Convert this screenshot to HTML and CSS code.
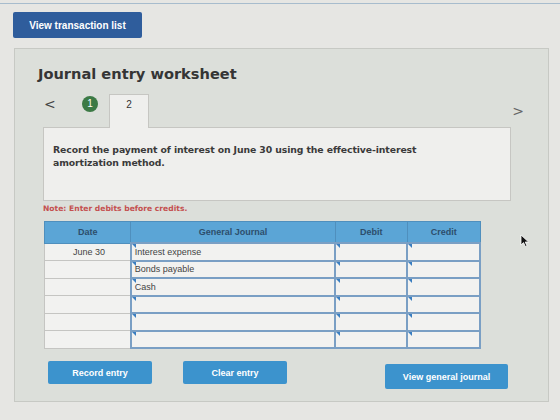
FILE: index.html
```html
<!DOCTYPE html>
<html lang="en">
<head>
  <meta charset="UTF-8" />
  <meta name="viewport" content="width=device-width, initial-scale=1.0" />
  <title>Journal entry worksheet</title>
  <link rel="stylesheet" href="styles.css">
</head>
<body>
  <div class="topline"></div>
  <button class="btn-dark">View transaction list</button>

  <div class="panel">
    <h2>Journal entry worksheet</h2>

    <div class="steps">
      <span class="arrow">&lt;</span>
      <span class="step-done">1</span>
      <span class="step-tab">2</span>
      <span class="arrow arrow-next">&gt;</span>
    </div>

    <div class="question">
      Record the payment of interest on June 30 using the effective-interest<br>
      amortization method.
    </div>

    <p class="note">Note: Enter debits before credits.</p>

    <table class="journal">
      <thead>
        <tr>
          <th class="col-date">Date</th>
          <th class="col-gj">General Journal</th>
          <th class="col-num">Debit</th>
          <th class="col-num">Credit</th>
        </tr>
      </thead>
      <tbody id="rows"></tbody>
    </table>

    <div class="actions">
      <button class="btn">Record entry</button>
      <button class="btn btn-clear">Clear entry</button>
      <button class="btn btn-wide">View general journal</button>
    </div>
  </div>

  <svg class="cursor" width="10" height="14" viewBox="0 0 10 14">
    <path d="M1 1 L1 11 L3.5 8.6 L5.4 12.6 L7 11.9 L5.2 8 L8.6 8 Z" fill="#111" stroke="#fff" stroke-width="0.8"/>
  </svg>

  <script>
    const lines = [
      { date: 'June 30', account: 'Interest expense' },
      { date: '', account: 'Bonds payable' },
      { date: '', account: 'Cash' },
      { date: '', account: '' },
      { date: '', account: '' },
      { date: '', account: '' }
    ];
    const body = document.getElementById('rows');
    lines.forEach(line => {
      const row = document.createElement('tr');
      row.innerHTML = `
        <td class="cell-date">${line.date}</td>
        <td class="cell-edit">${line.account}</td>
        <td class="cell-edit"></td>
        <td class="cell-edit"></td>
      `;
      body.appendChild(row);
    });
  </script>
</body>
</html>
```

FILE: styles.css
```css
body {
  margin: 0;
  padding: 0 11px 0 14px;
  background-color: #e6e6e3;
  font-family: "DejaVu Sans", Verdana, sans-serif;
  color: #333;
  height: 420px;
  box-sizing: border-box;
  overflow: hidden;
}
.topline {
  height: 1px;
  margin: 3px -14px 0 -14px;
  background: #a7bccd;
}
button {
  border: none;
  font-family: "Liberation Sans", Arial, sans-serif;
  font-weight: bold;
  color: #fff;
  cursor: pointer;
}
.btn-dark {
  display: block;
  margin: 8px 0 0 -1px;
  width: 129px;
  height: 26px;
  background: #2f5d9c;
  border-radius: 2px;
  font-size: 10px;
}
.panel {
  margin-top: 10px;
  width: 535px;
  height: 354px;
  box-sizing: border-box;
  background: #dcdfda;
  border: 1px solid #c7c9c4;
  padding: 0 0 0 28px;
}
h2 {
  margin: 16px 0 0 -5px;
  font-size: 14.6px;
  line-height: 18px;
  font-weight: bold;
  color: #353535;
}
.steps {
  display: flex;
  align-items: flex-start;
  height: 33px;
  margin-top: 11px;
  padding-right: 24px;
}
.arrow {
  font-size: 14px;
  line-height: 18px;
  color: #444;
  width: 38px;
  padding-left: 1px;
  margin-top: 1px;
}
.arrow-next {
  width: auto;
  margin-left: auto;
  margin-top: 8px;
  color: #666;
}
.step-done {
  width: 16px;
  height: 16px;
  border-radius: 50%;
  background: #3c7a45;
  color: #fff;
  font-family: "Liberation Sans", Arial, sans-serif;
  font-size: 10px;
  line-height: 16px;
  text-align: center;
  margin-right: 11px;
  margin-top: 2px;
}
.step-tab {
  width: 40px;
  height: 34px;
  box-sizing: border-box;
  background: #efefed;
  border: 1px solid #c6c6c2;
  border-bottom: none;
  text-align: center;
  font-family: "Liberation Sans", Arial, sans-serif;
  font-size: 10px;
  line-height: 20px;
  color: #333;
  position: relative;
  z-index: 1;
  margin-bottom: -1px;
}
.question {
  width: 468px;
  height: 74px;
  box-sizing: border-box;
  background: #efefed;
  border: 1px solid #c6c6c2;
  padding: 15px 10px 0 9px;
  font-size: 9.3px;
  line-height: 13px;
  font-weight: bold;
  color: #3a3a3a;
  letter-spacing: -0.1px;
}
.note {
  margin: 3px 0 0 0;
  font-size: 7.6px;
  color: #c4504f;
  font-weight: bold;
}
.journal {
  margin-top: 8px;
  margin-left: 1px;
  width: 437px;
  border-collapse: collapse;
  font-family: "Liberation Sans", Arial, sans-serif;
  font-size: 9px;
}
.journal th {
  background: #5ba5d6;
  color: #2d4e6c;
  height: 20px;
  font-weight: bold;
  border: 1px solid #4f8fbd;
  padding: 0;
}
.col-date { width: 86px; }
.col-gj { width: 205px; }
.col-num { width: 72px; }
.journal td {
  height: 15.5px;
  padding: 0 0 0 3px;
  background: #f2f2f0;
}
.cell-date {
  border: 1px solid #c5c5c2;
  text-align: center;
  color: #444;
}
.cell-edit {
  border: 2px solid #7a9fc4;
  color: #444;
  position: relative;
  text-align: left;
}
.cell-edit::before {
  content: "";
  position: absolute;
  left: 0;
  top: 0;
  border-style: solid;
  border-width: 4px 0 0 4px;
  border-color: #3a7ec0 transparent transparent transparent;
}
.actions {
  display: flex;
  margin-top: 12px;
  padding-left: 5px;
}
.btn {
  width: 104px;
  height: 23px;
  background: #3c93cd;
  border-radius: 2px;
  font-size: 9px;
  margin-right: 31px;
}
.btn-clear {
  margin-right: 98px;
}
.btn-wide {
  width: 123px;
  height: 25px;
  margin-top: 3px;
}
.cursor {
  position: absolute;
  left: 520px;
  top: 234px;
}
```
